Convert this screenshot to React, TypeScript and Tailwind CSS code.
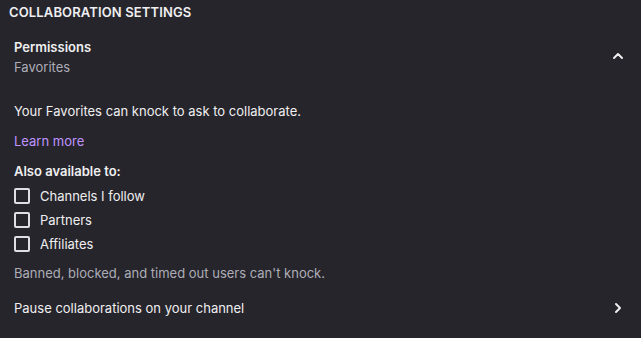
import { ChevronUp, ChevronRight } from "lucide-react";

const options = ["Channels I follow", "Partners", "Affiliates"];

export default function App() {
  return (
    <div
      className="w-[641px] h-[338px] bg-[#26252b] text-[#efeff1] text-[13px] overflow-hidden"
      style={{ fontFamily: "Inter, 'Noto Sans', sans-serif" }}
    >
      <div className="px-[9px] h-[26px] flex items-center font-semibold text-[13px] uppercase tracking-[0.01em]">
        Collaboration Settings
      </div>

      <div className="px-[14px]">
        <div className="flex items-center justify-between pt-[11px]">
          <div className="flex flex-col">
            <span className="font-semibold leading-[20px]">Permissions</span>
            <span className="text-[#adadb8] leading-[20px]">Favorites</span>
          </div>
          <ChevronUp className="w-[16px] h-[16px] mr-[1px] mb-[2px]" strokeWidth={3} />
        </div>

        <p className="mt-[24px] leading-[20px]">
          Your Favorites can knock to ask to collaborate.
        </p>
        <a className="block mt-[10px] leading-[20px] text-[#bf94ff]">Learn more</a>

        <div className="mt-[10px] font-semibold leading-[20px]">Also available to:</div>

        <div className="flex flex-col gap-[4px] mt-[5px]">
          {options.map((o) => (
            <label key={o} className="flex items-center gap-[10px] h-[20px]">
              <span className="w-[16px] h-[16px] rounded-[2px] border-2 border-[#dedee3]" />
              <span className="leading-[20px]">{o}</span>
            </label>
          ))}
        </div>

        <p className="mt-[9px] leading-[20px] text-[#adadb8]">
          Banned, blocked, and timed out users can't knock.
        </p>

        <div className="flex items-center justify-between mt-[15px]">
          <span className="leading-[20px]">Pause collaborations on your channel</span>
          <ChevronRight className="w-[16px] h-[16px] mr-[1px]" strokeWidth={3} />
        </div>
      </div>
    </div>
  );
}
